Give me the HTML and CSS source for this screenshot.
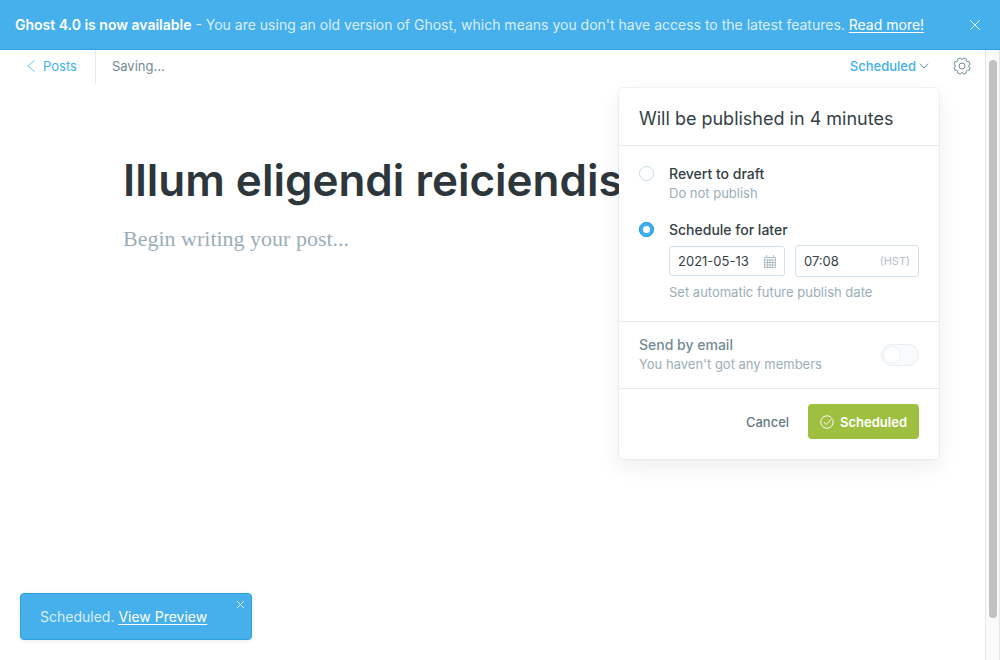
FILE: index.html
```html
<!DOCTYPE html>
<html lang="en">
<head>
<meta charset="utf-8">
<meta name="viewport" content="width=device-width, initial-scale=1">
<title>Ghost editor</title>
<link rel="stylesheet" href="styles.css">
</head>
<body>
<div class="app">
  <aside class="banner">
    <p class="banner-text"><b>Ghost 4.0 is now available</b> - You are using an old version of Ghost, which means you don't have access to the latest features. <a href="#upgrade">Read more!</a></p>
    <button class="icon-button" type="button" aria-label="Close banner">
      <svg width="12" height="12" viewBox="0 0 12 12" fill="none" stroke="currentColor"><path d="M1 1l10 10M11 1L1 11"/></svg>
    </button>
  </aside>
  <div class="workspace">
    <main class="editor">
      <header class="toolbar">
        <a class="back" href="#posts">
          <svg width="8" height="12" viewBox="0 0 8 12" fill="none" stroke="currentColor" stroke-opacity=".75"><path d="M7.500.5L.8 6l6.700 5.500"/></svg>
          Posts
        </a>
        <span class="status">Saving...</span>
        <button class="publish-trigger" type="button" aria-expanded="true">
          Scheduled
          <svg width="10" height="6" viewBox="0 0 10 6" fill="none" stroke="#5d8ca6"><path d="M1 .7l4 4.300L9 .7"/></svg>
        </button>
        <button class="icon-button settings" type="button" aria-label="Settings">
          <svg width="18" height="18" viewBox="0 0 18 18" fill="none" stroke="currentColor" stroke-linejoin="round"><circle cx="9" cy="9" r="3"/><path d="M10.730.88L13.520 2.040Q12.500 5.500 15.960 4.480L17.120 7.270Q13.900 9 17.120 10.730L15.960 13.520Q12.500 12.500 13.520 15.960L10.730 17.120Q9 13.900 7.270 17.120L4.480 15.960Q5.500 12.500 2.040 13.520L.88 10.730Q4.100 9 .88 7.270L2.040 4.480Q5.500 5.500 4.480 2.040L7.270.88Q9 4.100 10.730.88Z"/></svg>
        </button>
      </header>
      <div class="post">
        <textarea class="post-title" rows="1" aria-label="Post title">Illum eligendi reiciendis</textarea>
        <textarea class="post-body" rows="3" aria-label="Post content" placeholder="Begin writing your post..."></textarea>
      </div>
      <form class="menu">
        <h2 class="menu-title">Will be published in 4 minutes</h2>
        <div class="menu-section options">
          <div class="option">
            <input class="radio" type="radio" name="publish" id="draft">
            <div class="option-content">
              <label class="option-label" for="draft">Revert to draft</label>
              <p class="hint">Do not publish</p>
            </div>
          </div>
          <div class="option">
            <input class="radio" type="radio" name="publish" id="schedule" checked>
            <div class="option-content">
              <label class="option-label" for="schedule">Schedule for later</label>
              <div class="date-time">
                <div class="field date">
                  <input type="text" value="2021-05-13" aria-label="Publish date">
                  <svg width="12" height="13" viewBox="0 0 12 13" fill="none" stroke="#b3bfc5"><path d="M.5 2.500h11v10H.5zM.5 5h11M.5 7.500h11M.5 10h11M3.500 4v8.500M6 4v8.500M8.500 4v8.500M2.500 0v3M9.500 0v3"/></svg>
                </div>
                <div class="field time">
                  <input type="text" value="07:08" aria-label="Publish time">
                  <span class="zone">(HST)</span>
                </div>
              </div>
              <p class="hint">Set automatic future publish date</p>
            </div>
          </div>
        </div>
        <div class="menu-section email">
          <div>
            <label class="email-label" for="email">Send by email</label>
            <p class="hint">You haven't got any members</p>
          </div>
          <input class="switch" type="checkbox" id="email">
        </div>
        <footer class="menu-footer">
          <button class="cancel" type="button">Cancel</button>
          <button class="submit" type="button">
            <svg width="14" height="14" viewBox="0 0 14 14" fill="none" stroke="currentColor" stroke-linecap="round" stroke-linejoin="round"><path d="M13 5A6.300 6.300 0 1 1 11 2.100M4 7.200l2.300 2.300L12 3.500"/></svg>
            Scheduled
          </button>
        </footer>
      </form>
      <div class="toast" role="status">
        <span>Scheduled. <a href="#preview">View Preview</a></span>
        <button class="toast-close" type="button" aria-label="Dismiss">
          <svg width="9" height="9" viewBox="0 0 9 9" fill="none" stroke="currentColor"><path d="M1 1l7 7M8 1L1 8"/></svg>
        </button>
      </div>
    </main>
    <div class="scroll-track" aria-hidden="true"><div class="scroll-thumb"></div></div>
  </div>
</div>
</body>
</html>
```
FILE: styles.css
```css
* {
  box-sizing: border-box;
}

body {
  margin: 0;
  background: #fff;
  color: #343f44;
  font-family: Inter, "Liberation Sans", sans-serif;
  font-size: 13px;
  line-height: 20px;
}

p,
h2 {
  margin: 0;
}

button,
input,
textarea {
  margin: 0;
  padding: 0;
  border: 0;
  background: none;
  color: inherit;
  font: inherit;
}

textarea {
  display: block;
  width: 100%;
  resize: none;
  overflow: hidden;
}

svg {
  display: block;
  flex: none;
}

.app {
  display: flex;
  flex-direction: column;
  min-height: 100vh;
}

.banner {
  display: flex;
  align-items: center;
  justify-content: space-between;
  padding: 15px 19px 14px 15px;
  border-bottom: 1px solid #2b9fe0;
  background: #46b0ed;
  color: #daeffc;
  font-size: 14px;
}

.banner b {
  color: #fff;
  font-weight: 600;
}

.banner a,
.toast a {
  color: #fff;
  text-underline-offset: 2px;
}

.icon-button {
  display: flex;
}

.workspace {
  display: flex;
  flex: 1;
}

.editor {
  position: relative;
  flex: 1;
  min-width: 0;
}

.toolbar {
  display: flex;
  align-items: center;
  height: 34px;
  padding-right: 14px;
}

.toolbar > * {
  padding-bottom: 2px;
}

.back {
  display: flex;
  align-items: center;
  gap: 8px;
  align-self: stretch;
  padding-right: 18px;
  padding-left: 27px;
  border-right: 1px solid #dfe9ef;
  color: #3eb0ef;
  text-decoration: none;
}

.status {
  padding-left: 16px;
  color: #738a94;
}

.publish-trigger {
  display: flex;
  align-items: center;
  gap: 3px;
  margin-left: auto;
  color: #3eb0ef;
  font-weight: 500;
}

.settings {
  margin-left: 24px;
  color: #738a94;
}

.post {
  padding: 66px 123px 0;
}

.post-title {
  height: 60px;
  color: #2c363b;
  font-size: 44px;
  font-weight: 600;
  line-height: 60px;
  white-space: nowrap;
}

.post-body {
  margin-top: 13px;
  font-family: "Liberation Serif", serif;
  font-size: 22px;
  line-height: 32px;
}

.post-body::placeholder {
  color: #9baeb8;
  opacity: 1;
}

.menu {
  position: absolute;
  top: 38px;
  right: 46px;
  width: 320px;
  border-radius: 4px;
  background: #fff;
  box-shadow: 0 0 0 1px rgba(99, 114, 130, 0.08), 0 8px 20px rgba(27, 39, 51, 0.08);
}

.menu-title {
  padding: 18px 20px 14px;
  font-size: 18px;
  font-weight: 400;
  line-height: 25px;
}

.menu-section,
.menu-footer {
  border-top: 1px solid #e3edf3;
}

.options {
  display: flex;
  flex-direction: column;
  gap: 17px;
  padding: 18px 20px 19px;
}

.option {
  display: flex;
  gap: 15px;
}

.option-content {
  flex: 1;
  min-width: 0;
}

.option-label,
.email-label {
  display: block;
  font-size: 14px;
  font-weight: 500;
}

.hint {
  color: #9baeb8;
  line-height: 19px;
}

.radio {
  flex: none;
  width: 15px;
  height: 15px;
  margin-top: 2px;
  border: 1px solid #c5dbe8;
  border-radius: 50%;
  appearance: none;
}

.radio:checked {
  border: 4px solid #3eb0ef;
  outline: 1px solid #2b9fe0;
  outline-offset: -1px;
}

.date-time {
  display: flex;
  align-items: center;
  gap: 10px;
  margin: 5px 0 6px;
}

.field {
  display: flex;
  align-items: center;
  min-width: 0;
  height: 30px;
  padding: 0 8px;
  border: 1px solid #d3e2ea;
  border-radius: 3px;
}

.field input {
  flex: 1;
  width: 100%;
  min-width: 0;
}

.date {
  flex: 98;
}

.time {
  flex: 106;
  height: 32px;
}

.zone {
  color: #b4c0c6;
  font-size: 11px;
}

.email {
  display: flex;
  align-items: center;
  justify-content: space-between;
  padding: 13px 20px 14px;
}

.email-label {
  color: #738a94;
}

.switch {
  position: relative;
  width: 38px;
  height: 22px;
  border: 1px solid #e6eff5;
  border-radius: 11px;
  background: #f9fbfd;
  appearance: none;
}

.switch::before {
  position: absolute;
  top: 2px;
  left: 2px;
  width: 16px;
  height: 16px;
  border-radius: 50%;
  background: #fff;
  box-shadow: 0 0 2px rgba(40, 70, 90, 0.15);
  content: "";
}

.menu-footer {
  display: flex;
  align-items: center;
  justify-content: flex-end;
  gap: 19px;
  padding: 15px 20px 20px;
}

.cancel {
  color: #647a84;
  font-weight: 500;
}

.submit {
  display: flex;
  align-items: center;
  gap: 6px;
  height: 35px;
  padding: 0 12px;
  border-radius: 4px;
  background: #9fbf40;
  color: #fff;
  font-weight: 600;
}

.toast {
  position: absolute;
  bottom: 20px;
  left: 20px;
  width: 232px;
  padding: 13px 19px 12px;
  border: 1px solid #2b9fe0;
  border-radius: 4px;
  background: #46b0ed;
  box-shadow: 0 1px 5px rgba(0, 0, 0, 0.08);
  color: #daeffc;
  font-size: 14px;
}

.toast-close {
  position: absolute;
  top: 6px;
  right: 6px;
}

.scroll-track {
  width: 15px;
  padding: 10px 2px 42px 3px;
  border: 1px solid #e5e5e5;
  border-width: 0 1px;
  background: #fafafa;
}

.scroll-thumb {
  width: 8px;
  height: 100%;
  border-radius: 4px;
  background: #c1c1c1;
}
```
